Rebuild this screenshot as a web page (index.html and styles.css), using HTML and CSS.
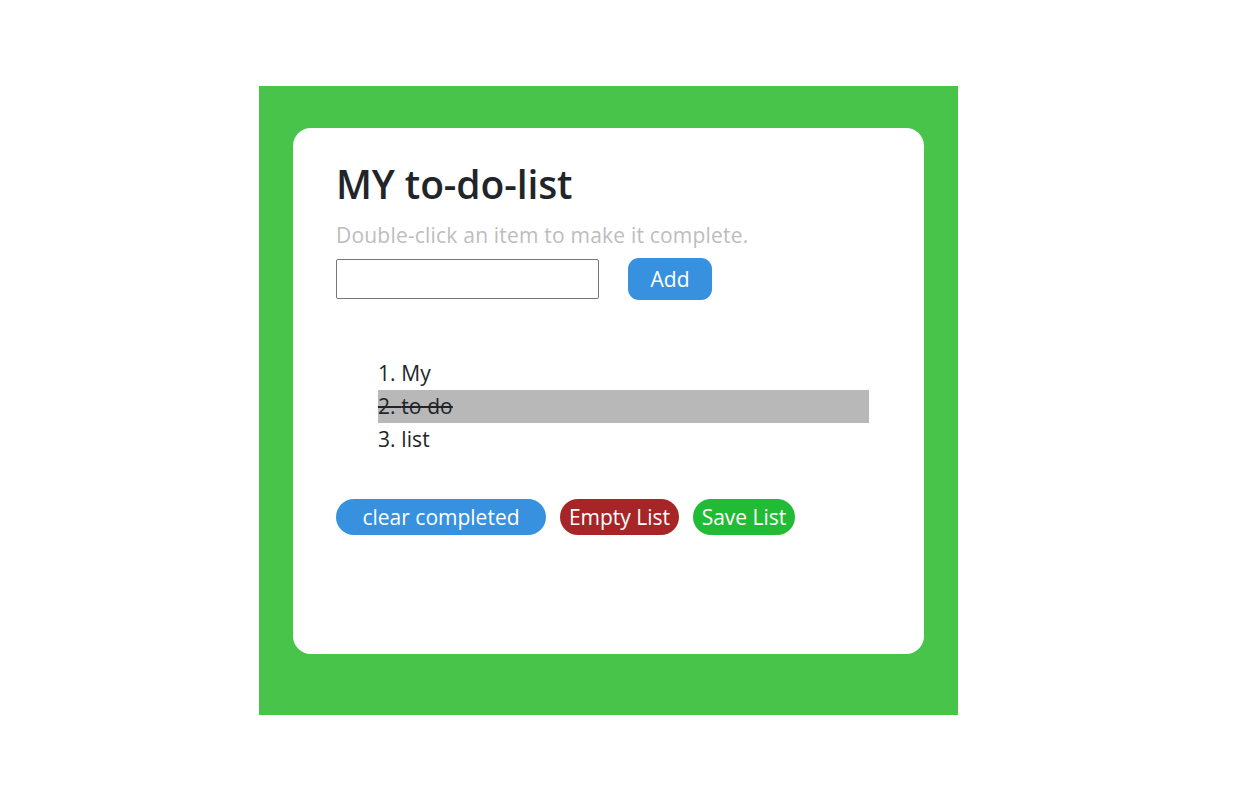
FILE: index.html
```html
<!DOCTYPE html>
<html>
<head>
<meta charset="utf-8">
<link rel="stylesheet" href="styles.css">
</head>
<body>
<div class="frame">
  <div class="card">
    <h1 class="title">MY to-do-list</h1>
    <p class="hint">Double-click an item to make it complete.</p>
    <div class="entry">
      <input class="field" type="text">
      <button class="btn add">Add</button>
    </div>
    <ol class="list">
      <li>My</li>
      <li class="done">to do</li>
      <li>list</li>
    </ol>
    <div class="actions">
      <button class="btn pill blue">clear completed</button>
      <button class="btn pill red">Empty List</button>
      <button class="btn pill green">Save List</button>
    </div>
  </div>
</div>
</body>
</html>
```
FILE: styles.css
```css
html, body {
  margin: 0;
  padding: 0;
  background: #fff;
}
body {
  font-family: "Open Sans", "Noto Sans", sans-serif;
  color: #212529;
  padding: 86px 0 0 259px;
}
.frame {
  width: 699px;
  height: 629px;
  box-sizing: border-box;
  background: #48c44a;
  padding: 42px 34px 0 34px;
}
.card {
  background: #fff;
  height: 526px;
  border-radius: 18px;
  box-sizing: border-box;
  padding: 32px 44px 0 43px;
}
.title {
  margin: 0;
  font-size: 39px;
  font-weight: 600;
  line-height: 48px;
  letter-spacing: -0.1px;
}
.hint {
  margin: 14px 0 0 0;
  font-size: 21px;
  line-height: 26px;
  color: #bdbdbd;
  letter-spacing: 0.2px;
}
.entry {
  display: flex;
  align-items: center;
  gap: 29px;
  margin-top: 10px;
}
.field {
  width: 263px;
  height: 40px;
  box-sizing: border-box;
  border: 1px solid #767676;
  border-radius: 2px;
  margin: 0;
}
.btn {
  font-family: inherit;
  border: none;
  color: #fff;
  font-size: 21px;
  cursor: pointer;
  padding: 0;
}
.add {
  width: 84px;
  height: 42px;
  background: #3891de;
  border-radius: 11px;
}
.list {
  list-style-position: inside;
  margin: 57px 0 0 42px;
  padding: 0;
  width: 491px;
  font-size: 21px;
  line-height: 33px;
  letter-spacing: 0.1px;
}
.list li.done {
  background: #b8b8b8;
  text-decoration: line-through;
}
.actions {
  display: flex;
  gap: 14px;
  margin-top: 43px;
}
.pill {
  height: 36px;
  border-radius: 18px;
  line-height: 36px;
}
.blue {
  width: 210px;
  background: #3891de;
}
.red {
  width: 119px;
  background: #a62628;
}
.green {
  width: 102px;
  background: #22bb36;
}
```
